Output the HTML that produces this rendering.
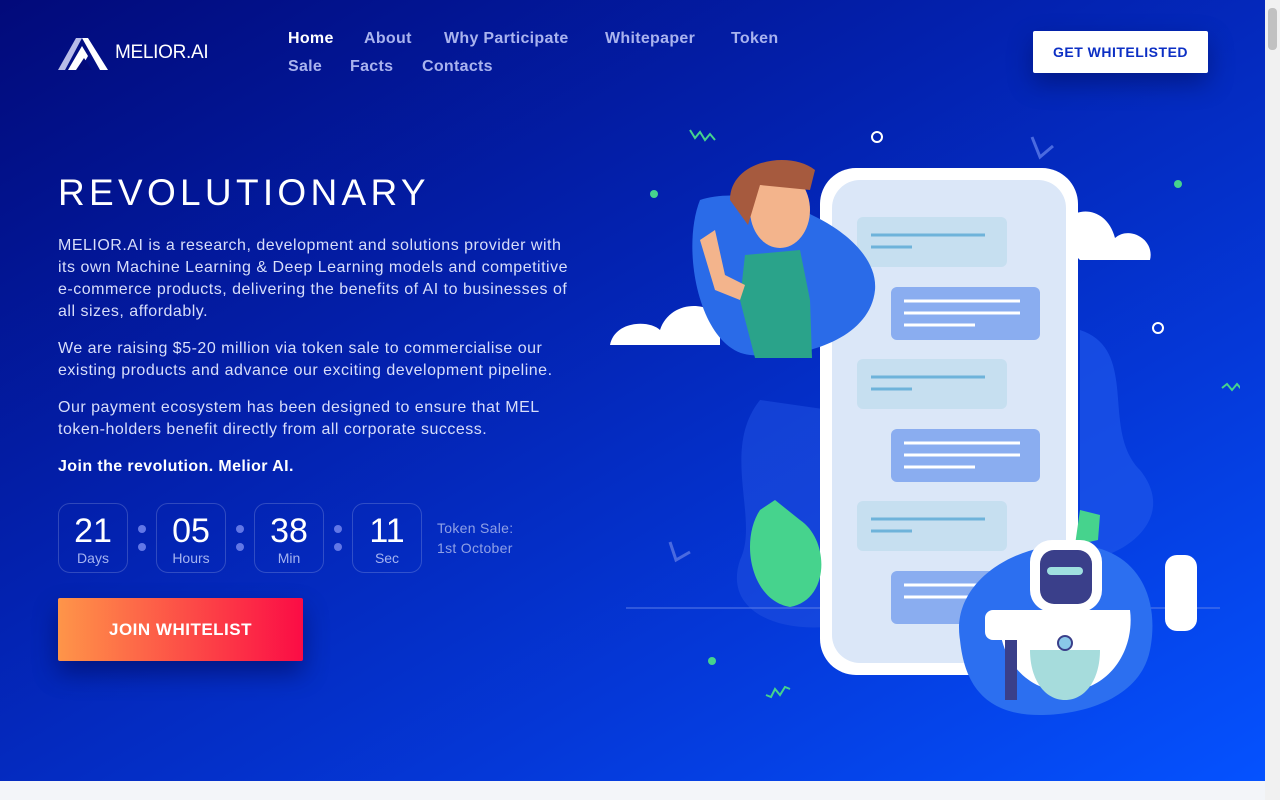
<!DOCTYPE html>
<html><head><meta charset="utf-8"><style>
*{margin:0;padding:0;box-sizing:border-box}
body{width:1280px;height:800px;overflow:hidden;font-family:"Liberation Sans",sans-serif;background:#f3f5f9;position:relative}
.hero{position:absolute;left:0;top:0;width:1265px;height:781px;background:linear-gradient(150deg,#020a7a 0%,#0322b0 40%,#0538d8 70%,#0552ff 100%)}
.sb{position:absolute;right:0;top:0;width:15px;height:800px;background:#f1f1f1}
.sb div{position:absolute;left:3px;top:8px;width:9px;height:42px;background:#c1c1c1;border-radius:4px}
.nav a{position:absolute;color:#a9b3ee;font-size:16px;font-weight:bold;text-decoration:none;letter-spacing:.3px}
.btn{position:absolute;left:1033px;top:31px;width:175px;height:42px;background:#fff;border-radius:2px;color:#0c2fc4;font-size:14px;font-weight:bold;text-align:center;line-height:42px;letter-spacing:.5px;box-shadow:0 10px 25px rgba(0,0,40,.35)}
h1{position:absolute;left:58px;top:172px;color:#fff;font-size:37px;font-weight:normal;letter-spacing:4.3px}
.p{position:absolute;left:58px;width:520px;color:#d8defa;font-size:16px;line-height:22px;letter-spacing:.5px}
.box{position:absolute;top:503px;width:70px;height:70px;border:1px solid rgba(255,255,255,.18);border-radius:12px;text-align:center;color:#fff}
.box b{display:block;font-size:34px;font-weight:normal;margin-top:9px;line-height:36px}
.box span{display:block;font-size:14px;color:#a5b3f0;margin-top:1px}
.dot{position:absolute;width:8px;height:8px;border-radius:50%;background:#6277e6}
.join{position:absolute;left:58px;top:598px;width:245px;height:63px;border-radius:2px;background:linear-gradient(90deg,#fe9549,#fb0c45);color:#fff;font-weight:bold;font-size:17px;text-align:center;line-height:63px;letter-spacing:.5px;box-shadow:0 12px 25px rgba(0,0,60,.45)}
</style></head><body>
<div class="hero">
<svg style="position:absolute;left:58px;top:36px" width="52" height="36" viewBox="0 0 52 36"><polygon points="0,34 18,2 24,2 7,34" fill="#b8bce8"/><polygon points="10,34 24,10 30,20 22,34" fill="#fff"/><polygon points="24,2 30,2 50,34 42,34" fill="#fff"/><polygon points="18,34 26,22 34,34" fill="#020a7a"/></svg>
<div style="position:absolute;left:115px;top:42px;color:#fff;font-size:19px;letter-spacing:-0.3px">MELIOR.AI</div>
<div class="nav"><a style="left:288px;top:30px;color:#fff">Home</a><a style="left:364px;top:30px">About</a><a style="left:444px;top:30px">Why Participate</a><a style="left:605px;top:30px">Whitepaper</a><a style="left:731px;top:30px">Token</a><a style="left:288px;top:58px">Sale</a><a style="left:350px;top:58px">Facts</a><a style="left:422px;top:58px">Contacts</a></div>
<div class="btn">GET WHITELISTED</div>
<h1>REVOLUTIONARY</h1>
<div class="p" style="top:235px">MELIOR.AI is a research, development and solutions provider with its own Machine Learning &amp; Deep Learning models and competitive e-commerce products, delivering the benefits of AI to businesses of all sizes, affordably.</div>
<div class="p" style="top:338px">We are raising $5-20 million via token sale to commercialise our existing products and advance our exciting development pipeline.</div>
<div class="p" style="top:397px">Our payment ecosystem has been designed to ensure that MEL token-holders benefit directly from all corporate success.</div>
<div class="p" style="top:456px;color:#fff;font-weight:bold;letter-spacing:.4px">Join the revolution. Melior AI.</div>
<div class="box" style="left:58px"><b>21</b><span>Days</span></div>
<div class="box" style="left:156px"><b>05</b><span>Hours</span></div>
<div class="box" style="left:254px"><b>38</b><span>Min</span></div>
<div class="box" style="left:352px"><b>11</b><span>Sec</span></div>
<div class="dot" style="left:138px;top:525px"></div><div class="dot" style="left:138px;top:543px"></div>
<div class="dot" style="left:236px;top:525px"></div><div class="dot" style="left:236px;top:543px"></div>
<div class="dot" style="left:334px;top:525px"></div><div class="dot" style="left:334px;top:543px"></div>
<div style="position:absolute;left:437px;top:518px;color:#8fa0e6;font-size:14px;line-height:20px;letter-spacing:.3px">Token Sale:<br>1st October</div>
<div class="join">JOIN WHITELIST</div>
<svg style="position:absolute;left:600px;top:120px" width="640" height="600" viewBox="600 120 640 600">
<path d="M760 400 C720 450 760 520 740 560 C720 620 800 640 860 620 L900 420 Z" fill="#1e4fe0" opacity=".6"/>
<path d="M1080 330 C1140 350 1100 430 1140 470 C1180 520 1120 560 1080 560 Z" fill="#1e56ea" opacity=".7"/>
<line x1="626" y1="608" x2="1220" y2="608" stroke="#5b7de8" stroke-width="1"/>
<path d="M610 345 C615 320 650 320 660 330 C670 300 710 300 720 320 L720 345 Z" fill="#fff"/>
<path d="M1080 260 L1150 260 C1155 240 1130 225 1115 238 C1105 200 1060 205 1060 240 Z" fill="#fff"/>
<rect x="820" y="168" width="258" height="507" rx="36" fill="#fff"/>
<rect x="832" y="180" width="234" height="483" rx="28" fill="#dbe7f8"/>
<g fill="#c6dff0"><rect x="857" y="217" width="150" height="50" rx="6"/><rect x="857" y="359" width="150" height="50" rx="6"/><rect x="857" y="501" width="150" height="50" rx="6"/></g>
<g fill="#8aadf0"><rect x="891" y="287" width="149" height="53" rx="6"/><rect x="891" y="429" width="149" height="53" rx="6"/><rect x="891" y="571" width="149" height="53" rx="6"/></g>
<g stroke="#fff" stroke-width="3"><line x1="904" y1="301" x2="1020" y2="301"/><line x1="904" y1="313" x2="1020" y2="313"/><line x1="904" y1="325" x2="975" y2="325"/><line x1="904" y1="443" x2="1020" y2="443"/><line x1="904" y1="455" x2="1020" y2="455"/><line x1="904" y1="467" x2="975" y2="467"/><line x1="904" y1="585" x2="1020" y2="585"/><line x1="904" y1="597" x2="1020" y2="597"/></g>
<g stroke="#6eb3da" stroke-width="3"><line x1="871" y1="235" x2="985" y2="235"/><line x1="871" y1="247" x2="912" y2="247"/><line x1="871" y1="377" x2="985" y2="377"/><line x1="871" y1="389" x2="912" y2="389"/><line x1="871" y1="519" x2="985" y2="519"/><line x1="871" y1="531" x2="912" y2="531"/></g>
<path d="M700 200 C760 180 880 230 875 290 C870 340 800 360 750 355 C700 350 680 250 700 200 Z" fill="#2a6be8"/>
<path d="M745 255 L800 250 L810 300 L812 358 L755 358 L740 300 Z" fill="#2aa38a"/>
<ellipse cx="780" cy="210" rx="30" ry="38" fill="#f3b48c"/>
<path d="M730 200 C730 160 790 150 815 170 L810 190 L760 185 L748 225 Z" fill="#a65a3e"/>
<path d="M700 240 L715 290 L740 300 L745 285 L725 275 L715 230 Z" fill="#f3b48c"/>
<path d="M760 510 C740 540 750 600 790 607 C830 600 830 540 800 520 L775 500 Z" fill="#46d38d"/>
<path d="M1080 510 L1100 515 L1098 540 L1075 545 Z" fill="#46d38d"/>
<path d="M960 640 C950 580 1020 540 1080 545 C1140 550 1160 600 1150 650 C1140 700 1080 715 1040 715 C990 715 965 690 960 640 Z" fill="#2c6ff0"/>
<rect x="1030" y="540" width="72" height="72" rx="22" fill="#fff"/>
<rect x="1040" y="550" width="52" height="54" rx="14" fill="#3a3f8a"/>
<rect x="1047" y="567" width="36" height="8" rx="4" fill="#9fe0e0"/>
<path d="M1000 610 L1130 610 C1135 650 1110 690 1065 692 C1020 690 995 650 1000 610 Z" fill="#fff"/>
<path d="M1030 650 L1100 650 C1100 680 1085 700 1065 700 C1045 700 1030 680 1030 650 Z" fill="#a6dcdc"/>
<circle cx="1065" cy="643" r="7" fill="#8ac8e8" stroke="#3a3f8a" stroke-width="2"/>
<rect x="1165" y="555" width="32" height="76" rx="12" fill="#fff"/>
<rect x="985" y="610" width="30" height="30" rx="8" fill="#fff"/>
<rect x="1005" y="640" width="12" height="60" fill="#3a3f8a"/>
<circle cx="877" cy="137" r="5" fill="none" stroke="#fff" stroke-width="2"/>
<circle cx="1158" cy="328" r="5" fill="none" stroke="#fff" stroke-width="2"/>
<g fill="#46d38d"><circle cx="654" cy="194" r="4"/><circle cx="1178" cy="184" r="4"/><circle cx="712" cy="661" r="4"/></g>
<g stroke="#46d38d" stroke-width="2" fill="none"><path d="M690 130 l5 8 5-6 5 8 5-6 5 6"/><path d="M1222 388 l5-4 5 6 5-6 5 6 5-4"/><path d="M766 695 l5 2 4-8 5 6 5-8 5 2"/></g>
<g fill="none" stroke="#4a6ae0" stroke-width="3"><path d="M1032 137 L1040 157 L1053 146"/><path d="M670 542 L676 560 L690 552"/><path d="M1243 482 L1250 502 L1263 492"/></g>
</svg>
</div>
<div class="sb"><div></div></div>
</body></html>
